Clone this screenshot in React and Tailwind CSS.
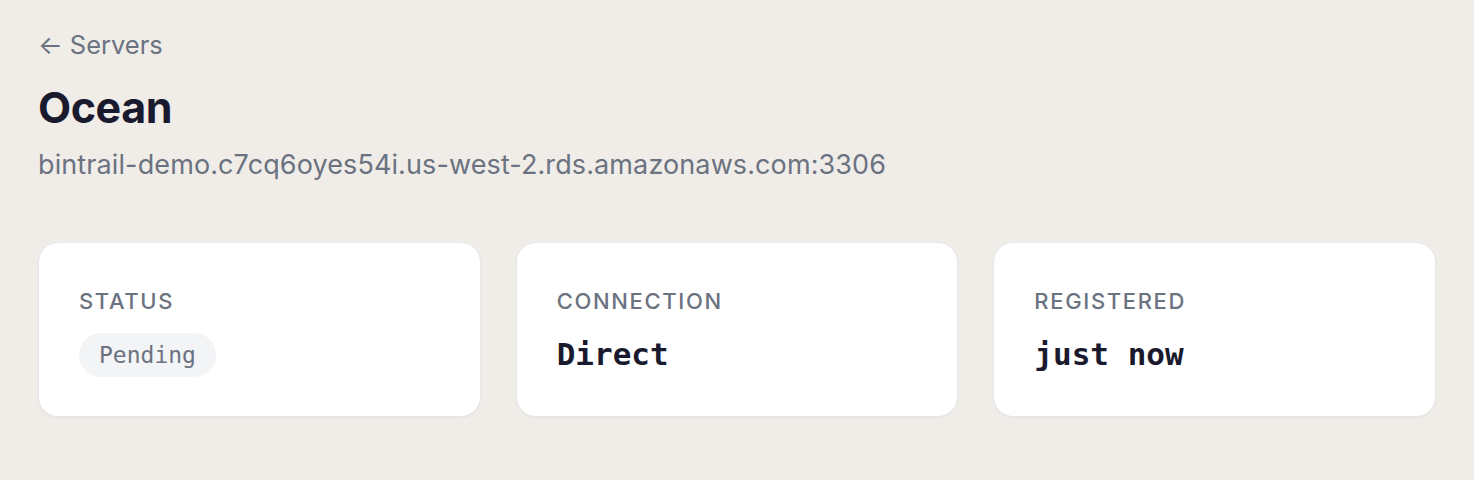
export default function App() {
  const cards = [
    { label: 'Status', badge: 'Pending' },
    { label: 'Connection', value: 'Direct' },
    { label: 'Registered', value: 'just now' },
  ];

  return (
    <div className="min-h-[480px] w-full bg-[#f0ede9] px-[38px] pt-[27px] pb-10 font-['Inter',sans-serif]">
      <a href="#" className="inline-flex items-center gap-[7px] text-[25.5px] leading-[36px] text-[#6b7280]">
        <span className="text-[26px] leading-none">←</span>
        <span>Servers</span>
      </a>

      <h1 className="mt-[19px] text-[43px] font-bold leading-[50px] tracking-[-0.01em] text-[#1a1a2e]">Ocean</h1>
      <p className="mt-[15px] text-[27px] leading-[36px] tracking-[0.004em] text-[#6b7280]">
        bintrail-demo.c7cq6oyes54i.us-west-2.rds.amazonaws.com:3306
      </p>

      <div className="mt-[59px] grid grid-cols-3 gap-[35px]">
        {cards.map((c) => (
          <div key={c.label} className="h-[175px] rounded-[20px] border border-[#e5e7eb] bg-white px-[40px] pt-[44px] shadow-[0_1px_2px_rgba(0,0,0,0.04)]">
            <div className="text-[22px] font-medium uppercase leading-[28px] tracking-[0.075em] text-[#6b7280]">{c.label}</div>
            {c.badge ? (
              <span className="mt-[18px] inline-flex h-[44px] items-center rounded-full bg-[#f3f4f6] px-[20px] font-['DejaVu_Sans_Mono',monospace] text-[23px] font-medium text-[#6b7280]">
                {c.badge}
              </span>
            ) : (
              <div className="mt-[19px] font-['DejaVu_Sans_Mono',monospace] text-[31px] font-semibold leading-[40px] text-[#1a1a2e]">{c.value}</div>
            )}
          </div>
        ))}
      </div>
    </div>
  );
}
